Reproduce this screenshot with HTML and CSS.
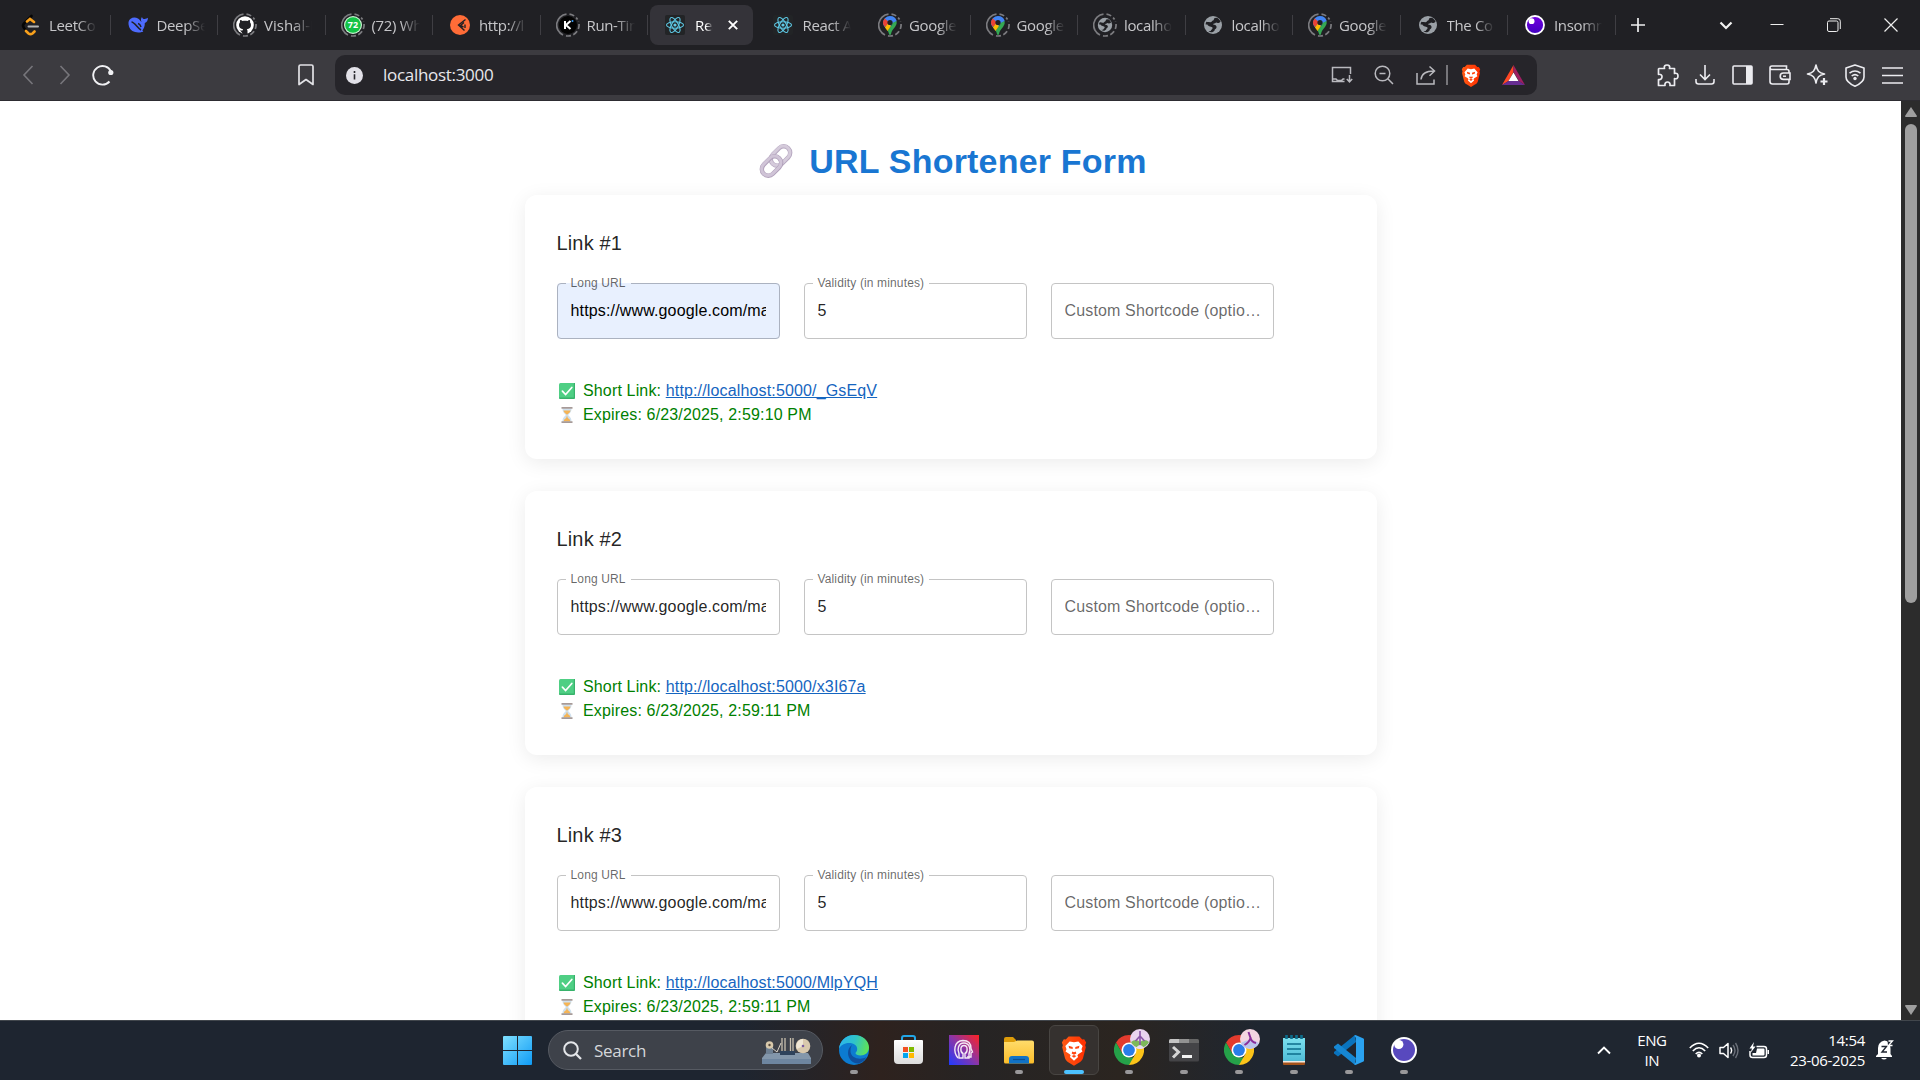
FILE: index.html
```html
<!DOCTYPE html>
<html lang="en">
<head>
<meta charset="utf-8">
<title>URL Shortener Form</title>
<link rel="stylesheet" href="styles.css">
</head>
<body>
<svg class="defs" width="0" height="0" aria-hidden="true">
  <defs>
    <linearGradient id="gWin" x1="0" y1="0" x2="1" y2="1"><stop offset="0" stop-color="#7fe0ff"/><stop offset="1" stop-color="#0f9bf5"/></linearGradient>
    <linearGradient id="gEdge" x1="0" y1="0.3" x2="1" y2="0.5"><stop offset="0" stop-color="#2bb5ee"/><stop offset=".5" stop-color="#2fc3c9"/><stop offset="1" stop-color="#5fe356"/></linearGradient>
    <linearGradient id="gStore" x1="0" y1="0" x2="0" y2="1"><stop offset="0" stop-color="#fff"/><stop offset="1" stop-color="#dcdcdc"/></linearGradient>
    <linearGradient id="gApp" x1="0" y1="1" x2="1" y2="0"><stop offset="0" stop-color="#1f3bff"/><stop offset=".5" stop-color="#8a35a8"/><stop offset="1" stop-color="#ff2222"/></linearGradient>
    <linearGradient id="gFolder" x1="0" y1="0" x2="0" y2="1"><stop offset="0" stop-color="#ffdc6b"/><stop offset="1" stop-color="#fbbd2a"/></linearGradient>
    <linearGradient id="gBrave" x1="0" y1="0" x2="1" y2="0"><stop offset="0" stop-color="#ff5a14"/><stop offset="1" stop-color="#ff2e00"/></linearGradient>
    <linearGradient id="gNote" x1="0" y1="0" x2="0" y2="1"><stop offset="0" stop-color="#7ce0ee"/><stop offset="1" stop-color="#4fbcd6"/></linearGradient>
    <linearGradient id="gIns" x1="0" y1="0" x2="0" y2="1"><stop offset="0" stop-color="#7400e1"/><stop offset="1" stop-color="#4000bf"/></linearGradient>
    <symbol id="ring" viewBox="0 0 24 24"><path d="M10.500 1.100A11 11 0 0 0 7 22" fill="none" stroke="#7b7b7f" stroke-width="1.700"/><path d="M10 22.800A11 11 0 0 0 22.500 8.500M13.500 1.100A11 11 0 0 1 21.500 6.500" fill="none" stroke="#7b7b7f" stroke-width="1.700" stroke-dasharray="5 2.500"/></symbol>
    <symbol id="react" viewBox="0 0 20 20"><rect width="20" height="20" rx="2" fill="#222426"/><g fill="none" stroke="#5ec9e6" stroke-width="1.100"><ellipse cx="10" cy="10" rx="8.500" ry="3.300"/><ellipse cx="10" cy="10" rx="8.500" ry="3.300" transform="rotate(60 10 10)"/><ellipse cx="10" cy="10" rx="8.500" ry="3.300" transform="rotate(120 10 10)"/></g><circle cx="10" cy="10" r="1.600" fill="#5ec9e6"/></symbol>
    <symbol id="pin" viewBox="0 0 24 24"><path d="M12 3a7 7 0 0 1 6.700 5L8.500 16Q5 12.500 5 10a7 7 0 0 1 7-7z" fill="#4285f4"/><path d="M6.700 5.500L12 10l-4.500 5Q5 12 5 10a7 7 0 0 1 1.700-4.500z" fill="#ea4335"/><path d="M7 13.500L18.700 8Q19.300 11 17 14c-2 2.500-3.500 4-4 7-.3 1.300-1.700 1.300-2 0-.3-1.500-.8-2.500-1.500-3.500l5-6.500L7.500 14.500z" fill="#34a853"/><path d="M7 14.500l3-4 3 2.500-3.500 5z" fill="#fbbc04"/><circle cx="12" cy="9.500" r="2.600" fill="#202024"/></symbol>
    <symbol id="globe" viewBox="0 0 20 20"><circle cx="10" cy="10" r="9" fill="#9aa0a6"/><path d="M11.500 3l2.500-.2c1.500.8 3 2.300 3.600 4-1.500 1.600-3.400 1.500-4.500.8-1.200 1.200-2.800.8-3 2 1.200.2 3 .3 3.400 1.800.4 1.600-.7 2.300-1.600 2.800-.3 1.700-1.400 2.600-2.700 3-1.600 0-3-.6-3.700-1.300h2.200c.4-1.600 1.900-1.600 1.900-3-.5-1.700-4.600-1-5.200-3.400H2.600c0-1 .3-2 .8-2.800 1.400.3 2.500 0 3.600.6C9 7.500 8.500 5.700 10.500 5.300z" fill="#202024"/></symbol>
    <symbol id="brave" viewBox="0 0 24 28"><path d="M7 1h10l2.600 2.800 1.800-.2L23.200 6.500l-.9 2.600.6 2-2.600 10.100c-.6 1.900-1.700 2.700-3 3.600L12 28l-5.300-3.200c-1.300-.9-2.400-1.700-3-3.600L1.100 11.100l.6-2L.8 6.500l1.800-2.900 1.800.2z" fill="url(#gBrave)"/><path d="M8 5.600L12 6.400l4-.8 4 4.300-1.100 3 .9 2-3.900 2.500-.8 1.100.7 1.600L12 23.500l-3.800-3.400.7-1.600-.8-1.100L4.200 14.900l.9-2-1.100-3z" fill="#fff"/><path d="M7 9.500l3.800 1.200v2L7.500 12zM17 9.500l-3.800 1.200v2l3.300-.7zM10.500 15L12 15.700l1.500-.7.7 1.700L12 18l-2.200-1.300zM9.800 19l2.200-.9 2.200.9L12 20.700z" fill="#ff4510"/></symbol>
    <symbol id="chrome" viewBox="0 0 30 30"><path d="M15 0a15 15 0 0 1 13 7.500H15L8.500 18.800 2 7.500A15 15 0 0 1 15 0z" fill="#e33b2e"/><path d="M2 7.500L8.500 18.800 15 22.500h6L15 30A15 15 0 0 1 2 7.500z" fill="#25a149"/><path d="M28 7.500A15 15 0 0 1 15 30l6.500-11.200L15 7.500z" fill="#fcc419"/><circle cx="15" cy="15" r="7.500" fill="#fff"/><circle cx="15" cy="15" r="5.900" fill="#2a7de9"/></symbol>
    <symbol id="check" viewBox="0 0 16 16"><rect width="16" height="16" rx="1.500" fill="#4fcf84"/><path d="M0 14.500h16a1.500 1.500 0 0 1-1.500 1.500h-13A1.500 1.500 0 0 1 0 14.500zM14.800 0H16v15h-1.200z" fill="#38b26b"/><path d="M3.400 8.200l3.200 3.300 6.200-7" fill="none" stroke="#fff" stroke-width="1.700" stroke-linecap="round"/></symbol>
    <symbol id="hourglass" viewBox="0 0 12 16"><path d="M1.500 1.500h9c0 4-1.800 4.500-3.300 6.500 1.500 2 3.300 2.500 3.300 6.500h-9c0-4 1.800-4.500 3.300-6.500C3.300 6 1.500 5.500 1.500 1.500z" fill="#cfe0ee"/><path d="M2.500 3.500h7C9 6 7.500 6.300 6 7.800 4.500 6.300 3 6 2.500 3.500zM6 8.500l.8 2.500c1.500.8 2.200 1.700 2.600 3.500H2.600c.4-1.800 1.100-2.700 2.600-3.500z" fill="#f5b455"/><path d="M.5 0h11v1.800H.5zM.5 14.200h11V16H.5z" fill="#a69a98"/></symbol>
  </defs>
</svg>

<header class="browser">
  <div class="tabstrip">
    <div class="tab"><span class="fav"><svg width="22" height="22" viewBox="0 0 22 22"><g fill="none" stroke-width="2.600" stroke-linecap="round"><path d="M12.500 2L5 9.500q-2 2 0 4.500l2.500 3" stroke="#050505"/><path d="M8 7.500l3-2.500 4 3M7 17l2.500 2.500q2 1.300 4 0l2-2" stroke="#f8a01c"/><path d="M9.500 12.500H19" stroke="#b3b3b3" stroke-width="2"/></g></svg></span><span class="tab-title">LeetCo</span></div>
    <div class="tab"><span class="fav"><svg width="22" height="22" viewBox="0 0 22 22"><path d="M1.500 8C2.500 4 7 2.500 11 4.500c1.500.7 2.500 2.500 3.500 3.500-1-2-.5-4 .5-5 .3 1.700 1.500 2 2.800 2 1 0 2.200-.6 3.200-1.200-.2 2.700-1.200 4.700-3.200 5.200.2 3-1 5.500-2.500 7.500 1.500.8 1 1.500-.5 1.400-5.300 1.600-11.500-.5-12.800-5.400-.4-1.500-.7-3-.5-4.500z" fill="#4d6bfe"/><path d="M4.500 8c3 0 6.500 6.500 9.500 8M11 9.500c2.200.5 2.500 2 3 3.500" stroke="#202024" stroke-width="1.600" fill="none"/></svg></span><span class="tab-title">DeepSe</span></div>
    <div class="tab"><span class="fav"><svg width="24" height="24" viewBox="0 0 24 24"><use href="#ring"/><circle cx="12" cy="12" r="8.800" fill="#fff"/><path d="M9.500 20.500v-3c-2 .5-2.600-.8-3.300-1.600M9.500 18c0-1 .2-1.400.7-1.800-2.700-.3-4.200-1.600-4.200-4.200 0-1.100.4-2 1-2.700-.2-.8-.1-1.700.2-2.300.9 0 1.700.5 2.300 1 1.600-.4 3.400-.4 5 0 .6-.5 1.400-1 2.300-1 .3.600.4 1.500.2 2.300.6.700 1 1.600 1 2.700 0 2.600-1.500 3.900-4.200 4.200.5.400.7 1 .7 1.800v3h-5z" fill="#202024"/></svg></span><span class="tab-title tight">Vishal-K</span></div>
    <div class="tab"><span class="fav"><svg width="24" height="24" viewBox="0 0 24 24"><use href="#ring"/><circle cx="12" cy="12" r="9" fill="#c9f3d3"/><circle cx="12" cy="12" r="7.800" fill="#13c345"/><text x="12" y="15.300" class="fav-text">72</text></svg></span><span class="tab-title">(72) Wh</span></div>
    <div class="tab"><span class="fav"><svg width="20" height="20" viewBox="0 0 20 20"><circle cx="10" cy="10" r="10" fill="#ff6c37"/><path d="M15.500 4.500L8.500 10l6 5.500M14 7.500L10.500 10.500l3 1.500M15 9.500v3.500" stroke="#202024" stroke-width="1.400" fill="none"/></svg></span><span class="tab-title">http://l</span></div>
    <div class="tab"><span class="fav"><svg width="24" height="24" viewBox="0 0 24 24"><use href="#ring"/><circle cx="12" cy="12" r="9" fill="#030303"/><path d="M9 8v8M14.500 8l-4.500 4 4.500 4" stroke="#fff" stroke-width="2" fill="none"/><circle cx="16.500" cy="8" r="1" fill="#39a0ff"/></svg></span><span class="tab-title">Run-Tim</span></div>
    <div class="tab active"><span class="fav"><svg width="20" height="20"><use href="#react"/></svg></span><span class="tab-title">Rea</span><svg class="tab-close" width="10" height="10" viewBox="0 0 10 10"><path d="M.8.8l8.400 8.400M9.200.8L.8 9.200" stroke="#fff" stroke-width="1.900"/></svg></div>
    <div class="tab nosep"><span class="fav"><svg width="20" height="20"><use href="#react"/></svg></span><span class="tab-title">React A</span></div>
    <div class="tab"><span class="fav"><svg width="24" height="24"><use href="#ring"/><use href="#pin"/></svg></span><span class="tab-title">Google</span></div>
    <div class="tab"><span class="fav"><svg width="24" height="24"><use href="#ring"/><use href="#pin"/></svg></span><span class="tab-title">Google</span></div>
    <div class="tab"><span class="fav"><svg width="24" height="24"><use href="#ring"/><use href="#globe" x="4" y="4" width="16" height="16"/></svg></span><span class="tab-title">localho</span></div>
    <div class="tab"><span class="fav"><svg width="20" height="20"><use href="#globe"/></svg></span><span class="tab-title">localho</span></div>
    <div class="tab"><span class="fav"><svg width="24" height="24"><use href="#ring"/><use href="#pin"/></svg></span><span class="tab-title">Google</span></div>
    <div class="tab"><span class="fav"><svg width="20" height="20"><use href="#globe"/></svg></span><span class="tab-title">The Co</span></div>
    <div class="tab"><span class="fav"><svg width="20" height="20" viewBox="0 0 20 20"><circle cx="10" cy="10" r="9" fill="url(#gIns)" stroke="#fff" stroke-width="1.800"/><circle cx="6.600" cy="6.200" r="2.900" fill="#fff"/></svg></span><span class="tab-title">Insomn</span></div>
    <div class="new-tab"><svg width="14" height="14" viewBox="0 0 14 14"><path d="M7 0v14M0 7h14" stroke="#eee" stroke-width="1.700"/></svg></div>
    <div class="window-controls">
      <span class="tab-search"><svg width="14" height="9" viewBox="0 0 14 9"><path d="M1.500 1.500L7 7l5.500-5.500" stroke="#f2f2f2" stroke-width="2.200" fill="none"/></svg></span>
      <span><svg width="14" height="14" viewBox="0 0 14 14"><path d="M.5 6.500h13" stroke="#eee"/></svg></span>
      <span><svg width="14" height="14" viewBox="0 0 14 14"><g fill="none" stroke="#eee"><rect x=".5" y="3" width="10.500" height="10.500" rx="1.500"/><path d="M3 .7h7.800q2.500 0 2.500 2.500V11"/></g></svg></span>
      <span><svg width="14" height="14" viewBox="0 0 14 14"><path d="M.5.5l13 13M13.500.5l-13 13" stroke="#eee" stroke-width="1.200"/></svg></span>
    </div>
  </div>

  <div class="toolbar">
    <div class="nav">
      <span><svg width="12" height="20" viewBox="0 0 12 20"><path d="M10.500 1L2 10l8.500 9" fill="none" stroke="#77767b" stroke-width="1.600"/></svg></span>
      <span><svg width="12" height="20" viewBox="0 0 12 20"><path d="M1.500 1L10 10l-8.500 9" fill="none" stroke="#77767b" stroke-width="1.600"/></svg></span>
      <span><svg width="22" height="22" viewBox="0 0 22 22"><path d="M19 7.500A9.300 9.300 0 1 0 17.500 17.500" fill="none" stroke="#f0f0f3" stroke-width="1.900"/><circle cx="18.800" cy="8.500" r="2.600" fill="#f0f0f3"/></svg></span>
    </div>
    <svg class="bookmark" width="16" height="22" viewBox="0 0 16 22"><path d="M1 2.500Q1 1 2.500 1h11Q15 1 15 2.500v18L8 15.500 1 20.500z" fill="none" stroke="#e2e2e6" stroke-width="1.700" stroke-linejoin="round"/></svg>
    <div class="address">
      <svg width="17" height="17" viewBox="0 0 17 17"><circle cx="8.500" cy="8.500" r="8.500" fill="#e2e1e8"/><path d="M8.500 7.300v5.200M8.500 4v1.900" stroke="#28272c" stroke-width="1.600"/></svg>
      <span class="url">localhost:3000</span>
      <div class="address-actions">
        <span><svg width="22" height="18" viewBox="0 0 22 18"><path d="M19.500 8V1.500H1.500v14h12M1 13h4l1.500 1.500h4L12 13h1.500M18.500 9v6.500M15.800 13l2.700 2.800 2.700-2.800" fill="none" stroke="#b9b9be" stroke-width="1.500"/></svg></span>
        <span><svg width="20" height="20" viewBox="0 0 20 20"><g fill="none" stroke="#b9b9be" stroke-width="1.500"><circle cx="8.500" cy="8.500" r="7.300"/><path d="M13.800 13.800L19 19M5.500 8.500h6"/></g></svg></span>
        <span><svg width="20" height="20" viewBox="0 0 20 20"><path d="M1 8v11h17v-4.500M5 14.500C5.500 9 9 6 18 6M13.500 1.500L18.500 6l-5 4.700" fill="none" stroke="#b9b9be" stroke-width="1.500"/></svg></span>
        <i class="divider"></i>
        <span><svg width="20" height="23"><use href="#brave"/></svg></span>
        <span><svg width="23" height="20" viewBox="0 0 23 20"><path d="M11.500 0L0 20l6.500-4 5-9z" fill="#ff4724"/><path d="M0 20h23l-6-4H6.500z" fill="#662d91"/><path d="M11.500 0L23 20l-6-4-5.500-9z" fill="#9e1f63"/><path d="M11.500 7.500l5 8.500h-10z" fill="#fff"/></svg></span>
      </div>
    </div>
    <div class="tools">
      <span><svg width="23" height="23" viewBox="0 0 23 23"><path d="M3 4.500h5.500c-.8-2.300.5-3.500 2.500-3.500s3.300 1.200 2.500 3.500h5V9.500c2.300-.8 3.500.5 3.500 2.500s-1.200 3.300-3.500 2.500V21.500H14c.5-2.500-1-3.500-2.500-3.500S8.500 19 9 21.500H2.500v-6C5 15.800 6 14.500 6 12.800S5 10 2.500 10.300V5z" fill="none" stroke="#ececf0" stroke-width="1.700" stroke-linejoin="round"/></svg></span>
      <span><svg width="20" height="20" viewBox="0 0 20 20"><path d="M10 0v14M5 9.500l5 5 5-5M1 14v2.500Q1 19 3.500 19h13q2.500 0 2.500-2.500V14" fill="none" stroke="#ececf0" stroke-width="1.600"/></svg></span>
      <span><svg width="21" height="20" viewBox="0 0 21 20"><rect x="1" y="1" width="19" height="18" rx="1" fill="none" stroke="#ececf0" stroke-width="1.600"/><path d="M14 1h6v18h-6z" fill="#ececf0"/></svg></span>
      <span><svg width="22" height="20" viewBox="0 0 22 20"><g fill="none" stroke="#ececf0" stroke-width="1.600"><path d="M1 3v13.500Q1 19 3.500 19H18q2 0 2-2v-2.500M20 8V6.500Q20 4.500 18 4.500H3Q1 4.500 1 2.800T3 1h14.500v3.500"/><path d="M21 8h-6.500q-3.300 0-3.300 3.200t3.300 3.200H21z"/></g><path d="M14 11.200h3" stroke="#ececf0" stroke-width="1.500"/></svg></span>
      <span><svg width="22" height="22" viewBox="0 0 22 22"><path d="M10 1c1.200 6 2.800 7.800 8.500 9-5.700 1.200-7.300 3-8.500 9-1.200-6-2.800-7.800-8.500-9C7.200 8.800 8.800 7 10 1z" fill="none" stroke="#ececf0" stroke-width="1.600" stroke-linejoin="round"/><path d="M18 14v7M14.500 17.500h7" stroke="#ececf0" stroke-width="2.200"/></svg></span>
      <span><svg width="20" height="23" viewBox="0 0 20 23"><g fill="none" stroke="#ececf0" stroke-width="1.600"><path d="M10 1l9 3v9c0 4-4 7-9 9.200C5 20 1 17 1 13V4z" stroke-linejoin="round"/><path d="M4.500 9.200q5.500-4.400 11 0M6.700 12q3.300-2.700 6.600 0"/></g><circle cx="10" cy="14.500" r="1.700" fill="#ececf0"/></svg></span>
      <span><svg width="21" height="17" viewBox="0 0 21 17"><path d="M0 1h21M0 8.500h21M0 16h21" stroke="#ececf0" stroke-width="1.700"/></svg></span>
    </div>
  </div>
</header>

<div class="viewport">
  <main class="page">
    <h1 class="title"><svg width="36" height="36" viewBox="0 0 36 36"><g fill="none" stroke-linecap="round"><rect x="11.500" y="6.500" width="22" height="13" rx="6.500" transform="rotate(-45 22.500 13)" stroke="#b5a6bf" stroke-width="4.400"/><rect x="11.500" y="6.200" width="22" height="13" rx="6.500" transform="rotate(-45 22.500 13)" stroke="#d5cbdb" stroke-width="3"/><rect x="2.500" y="16.500" width="22" height="13" rx="6.500" transform="rotate(-45 13.500 23)" stroke="#b0a0ba" stroke-width="4.400"/><rect x="2.500" y="16.200" width="22" height="13" rx="6.500" transform="rotate(-45 13.500 23)" stroke="#d0c4d7" stroke-width="3"/></g></svg><span>URL Shortener Form</span></h1>

    <section class="card">
      <h2>Link #1</h2>
      <div class="fields">
        <fieldset class="field filled"><legend>Long URL</legend><div class="value">https://www.google.com/ma</div></fieldset>
        <fieldset class="field"><legend>Validity (in minutes)</legend><div class="value">5</div></fieldset>
        <fieldset class="field empty"><div class="value">Custom Shortcode (optio…</div></fieldset>
      </div>
      <div class="result">
        <p><svg width="16" height="16"><use href="#check"/></svg>Short Link: <a href="#">http://localhost:5000/_GsEqV</a></p>
        <p><svg width="16" height="16"><use href="#hourglass"/></svg>Expires: 6/23/2025, 2:59:10 PM</p>
      </div>
    </section>

    <section class="card">
      <h2>Link #2</h2>
      <div class="fields">
        <fieldset class="field"><legend>Long URL</legend><div class="value">https://www.google.com/ma</div></fieldset>
        <fieldset class="field"><legend>Validity (in minutes)</legend><div class="value">5</div></fieldset>
        <fieldset class="field empty"><div class="value">Custom Shortcode (optio…</div></fieldset>
      </div>
      <div class="result">
        <p><svg width="16" height="16"><use href="#check"/></svg>Short Link: <a href="#">http://localhost:5000/x3I67a</a></p>
        <p><svg width="16" height="16"><use href="#hourglass"/></svg>Expires: 6/23/2025, 2:59:11 PM</p>
      </div>
    </section>

    <section class="card">
      <h2>Link #3</h2>
      <div class="fields">
        <fieldset class="field"><legend>Long URL</legend><div class="value">https://www.google.com/ma</div></fieldset>
        <fieldset class="field"><legend>Validity (in minutes)</legend><div class="value">5</div></fieldset>
        <fieldset class="field empty"><div class="value">Custom Shortcode (optio…</div></fieldset>
      </div>
      <div class="result">
        <p><svg width="16" height="16"><use href="#check"/></svg>Short Link: <a href="#">http://localhost:5000/MlpYQH</a></p>
        <p><svg width="16" height="16"><use href="#hourglass"/></svg>Expires: 6/23/2025, 2:59:11 PM</p>
      </div>
    </section>
  </main>
  <div class="scrollbar">
    <svg width="12" height="10" viewBox="0 0 12 10"><path d="M6 0l6 9q0 1-1 1H1Q0 10 0 9z" fill="#9f9f9f"/></svg>
    <div class="thumb"></div>
    <svg class="down" width="12" height="10" viewBox="0 0 12 10"><path d="M6 10l6-9q0-1-1-1H1Q0 0 0 1z" fill="#9f9f9f"/></svg>
  </div>
</div>

<footer class="taskbar">
  <div class="dock">
    <svg class="start" width="29" height="29" viewBox="0 0 29 29"><path d="M0 1q0-1 1-1h13v14H0zM15 0h13q1 0 1 1v13H15zM0 15h14v14H1q-1 0-1-1zM15 15h14v13q0 1-1 1H15z" fill="url(#gWin)"/></svg>
    <div class="search">
      <svg width="19" height="19" viewBox="0 0 19 19"><circle cx="8" cy="8" r="6.800" fill="none" stroke="#e4e6e9" stroke-width="2"/><path d="M12.800 12.800L18 18" stroke="#e4e6e9" stroke-width="2.300"/></svg>
      <span>Search</span>
      <svg class="doodle" width="50" height="27" viewBox="0 0 50 27"><path d="M4 16h42l3 5v5q0 1-1 1H1q-1 0-1-1v-5z" fill="#8397ab"/><path d="M0 22h49v4q0 1-1 1H1q-1 0-1-1z" fill="#6e86a0"/><path d="M4 9h7v8H4z" fill="#6d7f92"/><path d="M18 14h15v4H18z" fill="#2e435c"/><path d="M20 1v13M23 1v13M28.500 1v13M31 1v13" stroke="#c9c0ae" stroke-width="1.300"/><path d="M10 11l5 4 4-9" stroke="#d9d2c6" stroke-width="1" fill="none"/><circle cx="7.500" cy="8" r="3.800" fill="#d8c9ab"/><circle cx="7.500" cy="8" r="1.200" fill="#57493b"/><circle cx="41" cy="9" r="7.300" fill="#d9c9ad"/><path d="M41 2v7l-6 3a7 7 0 0 1 6-10z" fill="#f0e7d5"/><circle cx="41" cy="9" r="1.300" fill="#7a5ca0"/></svg>
    </div>
    <div class="apps">
      <span class="app running"><svg width="30" height="30" viewBox="0 0 30 30"><circle cx="15" cy="15" r="15" fill="#0c7bd0"/><path d="M0 14C.5 6 7 0 15 0c9 0 15 6 15 12.500 0 5-4 8-8.500 8-3 0-5-1-5-2.200 0-1.200 1.700-1.600 1.700-4.300 0-3.500-3.500-6-8-6C5 8 1.500 10.500 0 14z" fill="url(#gEdge)"/><path d="M13 10c-3 2-4 5-4 8 0 6 5 11 11 10.500A15 15 0 0 0 27.500 22c-6 3.500-16 1.500-16-6 0-2.500.5-4.500 1.500-6z" fill="#0f4f9e"/></svg></span>
      <span class="app store"><svg width="29" height="30" viewBox="0 0 29 30"><path d="M8 6V3q0-2 2-2h9q2 0 2 2v3" fill="none" stroke="#22a7e8" stroke-width="2"/><path d="M0 6q0-1 1-1h27q1 0 1 1v19q0 4-4 4H4q-4 0-4-4z" fill="url(#gStore)"/><path d="M9 12h5v5H9z" fill="#f25022"/><path d="M15 12h5v5h-5z" fill="#7fba00"/><path d="M9 18h5v5H9z" fill="#00a4ef"/><path d="M15 18h5v5h-5z" fill="#ffb900"/></svg></span>
      <span class="app"><svg width="30" height="30" viewBox="0 0 30 30"><path d="M0 0h30v30H0z" fill="url(#gApp)"/><g fill="none" stroke="#f4e9f5" stroke-width="1.400"><path d="M9 23c-5-6-4.500-17 5-17.500 6 0 8 4 8 8l1.500 3.500-1.500 1v4h-4"/><path d="M10 23h4v-4.500c-3-1.500-3-8 1-8s4 6.500 1 8V23h4v-4.500c2-3 1-10.500-5-10.500S8 15 10 18.500z"/></g></svg></span>
      <span class="app running"><svg width="30" height="27" viewBox="0 0 30 27"><path d="M0 2q0-2 2-2h7l3 3v4H0z" fill="#dd9c09"/><path d="M0 5h10l3-1.500h15q2 0 2 2V25q0 1.500-1.500 1.500h-27Q0 26.500 0 25z" fill="url(#gFolder)"/><path d="M5 26.500V22q0-3 3-3h14q3 0 3 3v4.500z" fill="#1173c7"/><path d="M9 22.500h12" stroke="#0b4f93" stroke-width="1.200"/></svg></span>
      <span class="app running current"><svg width="26" height="31"><use href="#brave"/></svg></span>
      <span class="app running"><svg width="30" height="30"><use href="#chrome"/></svg><svg class="badge" width="20" height="20" viewBox="0 0 20 20"><circle cx="10" cy="10" r="10" fill="#e9d3ef"/><path d="M1 13q5-4 9 0 5-4 9 0a10 10 0 0 1-18 0z" fill="#7db95a"/><path d="M6 19q4-6 8 0-4 2-8 0z" fill="#e6ddf0"/><path d="M10 2v14M10 7l-4.500 5M10 7l4.500 5" stroke="#8a55a8" stroke-width="1.600"/></svg></span>
      <span class="app running"><svg width="30" height="23" viewBox="0 0 30 23"><path d="M0 4h30v17q0 1.500-1.500 1.500h-27Q0 22.500 0 21z" fill="#444447"/><path d="M0 1.500Q0 0 1.500 0H10v4H0z" fill="#c4c4c4"/><path d="M10 0h10v4H10z" fill="#929292"/><path d="M20 0h8.500Q30 0 30 1.500V4H20z" fill="#666"/><path d="M4 8l5.500 5L4 18.500" stroke="#d5d5d5" stroke-width="3" fill="none"/><path d="M13 17.500h10" stroke="#f2f2f2" stroke-width="3"/></svg></span>
      <span class="app running"><svg width="30" height="30"><use href="#chrome"/></svg><svg class="badge" width="20" height="20" viewBox="0 0 20 20"><circle cx="10" cy="10" r="10" fill="#f3d5e0"/><path d="M1 14q9-6 18 0a10 10 0 0 1-18 0z" fill="#bcc4ec"/><path d="M8.500 3l2 6q-1 4-6 7M10.500 9q1 4 5.500 5" stroke="#8a2f9a" stroke-width="2" fill="none"/></svg></span>
      <span class="app running"><svg width="22" height="30" viewBox="0 0 22 30"><path d="M0 25h22v4q0 1-1 1H1q-1 0-1-1z" fill="#a4521a"/><path d="M0 24h22v3.500H0z" fill="#efe9e2"/><path d="M0 3h22v23H0z" fill="url(#gNote)"/><path d="M4 9h14M4 14h14M4 19h14" stroke="#0c6d8c" stroke-width="1.700"/><path d="M3.500 0v4M8.500 0v4M13.500 0v4M18.500 0v4" stroke="#0c6d8c" stroke-width="2.600"/></svg></span>
      <span class="app running"><svg width="30" height="30" viewBox="0 0 30 30"><path d="M22 7L4 21.500 0 18.500v-1.500L21 0z" fill="#0a73bd"/><path d="M22 23L4 8.500 0 11.500V13l21 17z" fill="#1687d3"/><path d="M21.500 0l8 3.500q.5.300.5 1v21q0 .7-.5 1L21.500 30q-1 0-1-1l1.500-2V3l-1.500-2q0-1 1-1z" fill="#2aa2f0"/></svg></span>
      <span class="app running"><svg width="26" height="26" viewBox="0 0 26 26"><circle cx="13" cy="13" r="13" fill="#fff"/><circle cx="13" cy="13" r="11" fill="#5849be"/><circle cx="7.800" cy="7.500" r="4.600" fill="#fff"/></svg></span>
    </div>
  </div>
  <div class="tray">
    <svg width="14" height="9" viewBox="0 0 14 9"><path d="M1 7.500l6-6 6 6" stroke="#fff" stroke-width="1.900" fill="none"/></svg>
    <div class="lang">ENG<br>IN</div>
    <div class="status">
      <svg width="20" height="16" viewBox="0 0 20 16"><g fill="none" stroke="#fff" stroke-width="1.600"><path d="M.8 6Q10-3.500 19.200 6M3.800 9Q10 2.500 16.200 9M6.700 12Q10 8.500 13.300 12"/></g><circle cx="10" cy="13.500" r="2" fill="#fff"/></svg>
      <svg width="20" height="17" viewBox="0 0 20 17"><path d="M1 5.500h3.500L9 1.500v14l-4.500-4H1z" fill="none" stroke="#fff" stroke-width="1.500" stroke-linejoin="round"/><path d="M11.500 5.500q2.200 3 0 6" fill="none" stroke="#fff" stroke-width="1.400"/><path d="M14 3q4 5.500 0 11M16.500 1q5 7.500 0 15" fill="none" stroke="#6b7079" stroke-width="1.400"/></svg>
      <svg width="20" height="17" viewBox="0 0 20 17"><path d="M7.500 4.500H15q2.500 0 2.500 2.500v6q0 2.500-2.500 2.500H3.500Q1 15.500 1 13V9" fill="none" stroke="#fff" stroke-width="1.500"/><path d="M8 6.500h6.500q1 0 1 1v5q0 1-1 1H3.500V11H7zM18.500 8h1.500v4h-1.500z" fill="#fff"/><path d="M5 0L.5 6.500H3L1.500 11 6.500 4.500H4z" fill="#fff"/></svg>
    </div>
    <div class="clock">14:54<br>23-06-2025</div>
    <svg width="18" height="20" viewBox="0 0 18 20"><path d="M2 8q0-6 6.500-7.500 6 .5 6 8v5.500L16 16v1H0v-1l2-2z" fill="#fff"/><path d="M5 18h6q-3 3-6 0z" fill="#fff"/><path d="M5.500 6.500h5L6 12h5" fill="none" stroke="#1f2631" stroke-width="1.400"/><path d="M11.500 0H18v6h-6z" fill="#1f2631"/><path d="M12.500 1h4l-4 4.500h4" fill="none" stroke="#fff" stroke-width="1.300"/></svg>
  </div>
</footer>
</body>
</html>
```
FILE: styles.css
```css
* { box-sizing: border-box; }

body {
  margin: 0;
  width: 1920px;
  height: 1080px;
  overflow: hidden;
  display: flex;
  flex-direction: column;
  background: #fff;
  font-family: "Liberation Sans", Arial, sans-serif;
}

svg { display: block; flex: none; }
.defs { position: absolute; }

.browser, .taskbar { font-family: "Open Sans", "Noto Sans", sans-serif; }

.browser { flex: none; height: 101px; background: #3c3b40; border-bottom: 1px solid #2d2c31; }

/* Tabs */
.tabstrip { display: flex; align-items: center; height: 50px; padding-left: 3px; background: #202024; }
.tab { flex: none; display: flex; align-items: center; position: relative; width: 107.500px; height: 40px; padding-left: 15px; }
.tab::after { content: ""; position: absolute; right: 0; top: 10px; width: 1px; height: 20px; background: #3f3e43; }
.tab.active::after, .tab.nosep::after { display: none; }
.tab.active { width: 103px; margin: 0 2.500px 0 2px; padding-left: 13px; border-radius: 8px; background: #343339; }
.fav { flex: none; width: 24px; display: flex; justify-content: center; }
.fav-text { font: bold 9px "Open Sans", sans-serif; fill: #fff; text-anchor: middle; }
.tab-title {
  width: 48px;
  margin-left: 7px;
  overflow: hidden;
  white-space: nowrap;
  font-size: 15px;
  letter-spacing: -0.350px;
  line-height: 22px;
  padding-bottom: 1px;
  color: #c6c6c9;
  -webkit-mask-image: linear-gradient(90deg, #000 60%, transparent);
  mask-image: linear-gradient(90deg, #000 60%, transparent);
}
.tab-title.tight { letter-spacing: 0; }
.active .tab-title { width: 18px; margin-left: 8px; color: #fff; }
.nosep .tab-title { margin-left: 8px; }
.tab-close { margin-left: 14.500px; }
.new-tab { width: 44px; display: flex; justify-content: center; }
.window-controls { display: flex; align-items: center; margin-left: auto; padding-right: 1px; }
.window-controls span { width: 57px; display: flex; justify-content: center; }
.window-controls .tab-search { width: 45px; }

/* Toolbar */
.toolbar { display: flex; align-items: center; height: 50px; padding-right: 9px; }
.nav { display: flex; margin-left: 9px; align-items: center; }
.nav span { width: 37.500px; display: flex; justify-content: center; }
.bookmark { margin-left: 176.500px; }
.address { display: flex; align-items: center; width: 1202px; height: 40px; margin-left: 21px; padding: 0 3px 0 11px; border-radius: 10px; background: #26252a; }
.url { margin-left: 20px; padding-bottom: 2px; font-size: 17px; letter-spacing: -0.300px; color: #e8e8ec; }
.address-actions { display: flex; align-items: center; margin-left: auto; }
.address-actions span { width: 42px; display: flex; justify-content: center; }
.divider { width: 1.500px; height: 20px; margin-right: 2.500px; margin-left: -0.500px; background: #77767b; }
.tools { display: flex; align-items: center; margin-left: auto; }
.tools span { width: 37.500px; display: flex; justify-content: center; }

/* Page */
.viewport { flex: 1; min-height: 0; display: flex; }
.page { flex: 1; overflow: hidden; padding-top: 39px; display: flex; flex-direction: column; align-items: center; gap: 32px; }
.title { flex: none; display: flex; align-items: center; gap: 15px; margin: 0 0 -19px 4px; height: 42px; color: #1976d2; font-size: 34px; font-weight: 700; letter-spacing: 0.200px; line-height: 42px; }
.card { flex: none; width: 852px; height: 264px; padding: 32px; border-radius: 12px; background: #fff; box-shadow: 0 4px 20px rgba(0, 0, 0, 0.080); }
.card h2 { margin: 0; font-size: 20px; font-weight: 400; letter-spacing: 0.150px; line-height: 32px; color: rgba(0, 0, 0, 0.870); }
.fields { display: flex; gap: 24px; margin-top: 17px; align-items: flex-end; }
.field { width: 223px; height: 63px; min-width: 0; margin: 0; padding: 0 8px; border: 1px solid #c4c4c4; border-radius: 4px; }
.field legend { padding: 0 5px; font-size: 12px; letter-spacing: 0.140px; line-height: 15px; color: rgba(0, 0, 0, 0.600); }
.field .value { height: 23px; margin: 8px 5px 0; overflow: hidden; white-space: nowrap; font-size: 16px; letter-spacing: 0.150px; line-height: 23px; color: rgba(0, 0, 0, 0.870); }
.field.filled { background: #e8f0fe; border-color: #abb2c0; }
.field.filled .value { color: #000; }
.field.empty { height: 56px; }
.field.empty .value { margin: 15px 0 0 5px; color: rgba(0, 0, 0, 0.600); }
.result { margin-top: 40px; color: #008000; font-size: 16px; letter-spacing: 0.150px; line-height: 24px; }
.result p { display: flex; align-items: center; margin: 0; white-space: pre; }
.result p svg { margin: 0 8.500px 0 2px; }
.result a { color: #1565c0; }

.scrollbar { flex: none; width: 19px; background: #2c2c2c; display: flex; flex-direction: column; align-items: center; padding: 6px 0 5px; }
.thumb { width: 12px; height: 479px; margin-top: 7px; border-radius: 6px; background: #9f9f9f; }
.scrollbar .down { margin-top: auto; }

/* Taskbar */
.taskbar {
  flex: none;
  display: flex;
  align-items: center;
  height: 60px;
  padding: 0 26px 1px 503px;
  border-top: 1px solid #41464c;
  background: linear-gradient(90deg, #1e2530 0, #1e2530 740px, #2e221e 880px, #262424 980px, #2b2520 1120px, #1f2630 1260px);
  color: #fff;
}
.dock { display: flex; align-items: center; }
.search { display: flex; align-items: center; width: 275px; height: 40px; margin: 0 3.500px 0 16px; padding: 0 10px 0 14px; border: 1px solid #565a62; border-radius: 20px; background: #3e424a; }
.search span { margin-left: 12px; font-size: 17px; letter-spacing: -0.300px; color: #d5d7da; }
.doodle { margin-left: auto; }
.apps { display: flex; }
.app { position: relative; display: flex; align-items: center; justify-content: center; width: 50px; height: 50px; margin: 0 2.500px; border: 1px solid transparent; border-radius: 6px; }
.app.store { padding-right: 1px; }
.app.current { border-color: #484542; background: #35312f; }
.app.running::after { content: ""; position: absolute; left: 20px; bottom: 0; width: 8px; height: 4px; border-radius: 2px; background: #99989a; }
.app.current::after { left: 14px; width: 20px; background: #4cc2ff; }
.badge { position: absolute; right: 3px; top: 3px; }
.tray { display: flex; align-items: center; margin-left: auto; text-align: center; font-size: 15px; line-height: 20px; letter-spacing: -0.320px; }
.lang { width: 30px; margin-left: 26px; }
.status { display: flex; align-items: center; gap: 10px; margin-left: 22px; }
.clock { margin-left: 21px; text-align: right; }
.tray > svg:last-child { margin-left: 11px; }
```
